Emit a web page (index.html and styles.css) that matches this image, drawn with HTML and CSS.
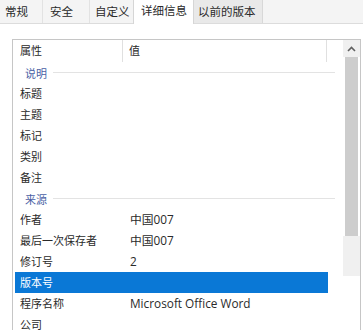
FILE: index.html
```html
<!DOCTYPE html>
<html lang="zh-CN">
<head>
<meta charset="utf-8">
<link rel="stylesheet" href="styles.css">
</head>
<body>
<div class="tabs">
  <div class="tab t1">常规</div>
  <div class="tab t2">安全</div>
  <div class="tab t3">自定义</div>
  <div class="tab active">详细信息</div>
  <div class="tab last">以前的版本</div>
</div>
<div class="panel">
  <div class="listbox">
    <div class="content">
      <div class="header">
        <div class="hcell name">属性</div>
        <div class="hcell val">值</div>
      </div>
      <div class="group"><span>说明</span><i class="gline"></i></div>
      <div class="row"><span class="n">标题</span><span class="v"></span></div>
      <div class="row"><span class="n">主题</span><span class="v"></span></div>
      <div class="row"><span class="n">标记</span><span class="v"></span></div>
      <div class="row"><span class="n">类别</span><span class="v"></span></div>
      <div class="row"><span class="n">备注</span><span class="v"></span></div>
      <div class="group"><span>来源</span><i class="gline"></i></div>
      <div class="row"><span class="n">作者</span><span class="v">中国007</span></div>
      <div class="row"><span class="n">最后一次保存者</span><span class="v">中国007</span></div>
      <div class="row"><span class="n">修订号</span><span class="v">2</span></div>
      <div class="row sel"><span class="n">版本号</span><span class="v"></span></div>
      <div class="row"><span class="n">程序名称</span><span class="v">Microsoft Office Word</span></div>
      <div class="row"><span class="n">公司</span><span class="v"></span></div>
    </div>
    <div class="scrollbar">
      <div class="arrow"><svg width="9" height="6" viewBox="0 0 9 6"><path d="M1 5 L4.5 1.5 L8 5" fill="none" stroke="#606060" stroke-width="1.6"/></svg></div>
      <div class="thumb"></div>
      <div class="track"></div>
    </div>
  </div>
</div>
</body>
</html>
```
FILE: styles.css
```css
html, body {
  margin: 0;
  padding: 0;
  background: #ffffff;
  width: 363px;
  height: 330px;
  overflow: hidden;
  font-family: "Noto Sans CJK SC", "Noto Sans", sans-serif;
  color: #2a2a2a;
}
.tabs {
  display: flex;
  height: 23px;
  background: #f4f4f4;
  border-bottom: 1px solid #dcdcdc;
  font-size: 11.5px;
  line-height: 23px;
}
.tab {
  box-sizing: border-box;
  border-right: 1px solid #e2e2e2;
  text-align: left;
}
.t1 { width: 43px; padding-left: 5px; }
.t2 { width: 47px; padding-left: 7px; }
.t3 { width: 43px; padding-left: 5px; border-right: none; }
.tab.active {
  width: 61px;
  padding-left: 7px;
  background: #ffffff;
  border-left: 1px solid #d6d6d6;
  border-right: 1px solid #d6d6d6;
  height: 25px;
  margin-top: -1px;
  position: relative;
  z-index: 1;
}
.tab.last {
  width: 69px;
  padding-left: 4px;
  background: #e9e9e9;
  border-right: 1px solid #d8d8d8;
}
.panel {
  padding: 15px 0 0 12px;
}
.listbox {
  display: flex;
  width: 349px;
  height: 300px;
  border: 1px solid #c6c6c6;
  border-bottom: none;
  box-sizing: border-box;
}
.content {
  flex: 1;
  font-size: 11px;
}
.header {
  display: flex;
  height: 22px;
  line-height: 21px;
}
.hcell {
  box-sizing: border-box;
  border-right: 1px solid #e0e0e0;
}
.hcell.name { width: 110px; padding-left: 7px; }
.hcell.val { width: 204px; padding-left: 6px; }
.group {
  display: flex;
  align-items: center;
  height: 21px;
  width: 322px;
  padding-left: 12px;
  box-sizing: border-box;
  color: #4a5fa5;
}
.gline {
  flex: 1;
  height: 1px;
  background: #e3e3e3;
  margin-left: 6px;
}
.row {
  display: flex;
  height: 21px;
  line-height: 21px;
  margin-left: 2px;
  width: 313px;
}
.row .n { width: 108px; padding-left: 5px; box-sizing: border-box; }
.row .v { padding-left: 7px; font-family: "Open Sans", "Noto Sans CJK SC", sans-serif; font-size: 11.8px; }
.row .v:empty { display: none; }
.row.sel {
  background: #0a78d6;
  color: #ffffff;
}
.scrollbar {
  width: 17px;
  display: flex;
  flex-direction: column;
}
.arrow {
  height: 17px;
  background: #f0f0f0;
  display: flex;
  align-items: center;
  justify-content: center;
}
.thumb {
  height: 179px;
  margin: 0 2px;
  background: #cdcdcd;
}
.track {
  height: 40px;
  background: #f0f0f0;
}
```
